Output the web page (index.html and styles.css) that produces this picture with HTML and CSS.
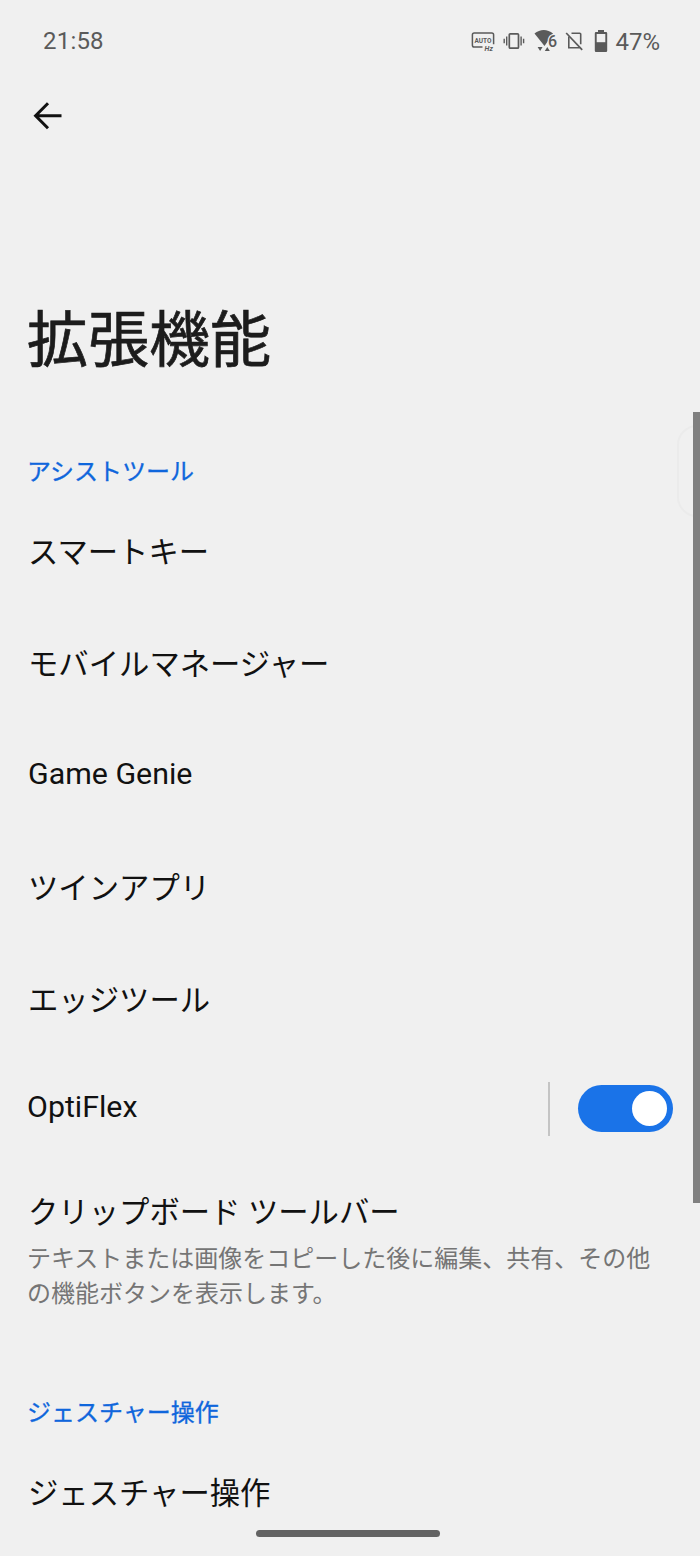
FILE: index.html
```html
<!DOCTYPE html>
<html lang="ja">
<head>
  <meta charset="UTF-8">
  <meta name="viewport" content="width=device-width, initial-scale=1.0">
  <title>拡張機能</title>
  <link rel="stylesheet" href="styles.css">
</head>
<body>
  <div class="screen">
    <div class="status-bar">
      <span class="clock">21:58</span>
      <div class="status-icons">
        <svg class="icon-refresh" width="24" height="22" viewBox="0 0 24 22">
          <path d="M11.5 17H3.200a1.800 1.800 0 0 1-1.800-1.800V4.800A1.800 1.800 0 0 1 3.200 3h17.600a1.800 1.800 0 0 1 1.800 1.800v9.500" fill="none" stroke="#5a5a5a" stroke-width="1.500"/>
          <text x="12" y="12.600" text-anchor="middle" class="auto-text">AUTO</text>
          <text x="13.600" y="20.600" class="hz-text">Hz</text>
        </svg>
        <svg class="icon-vibrate" width="22" height="20" viewBox="0 0 22 20">
          <rect x="6.300" y="2.800" width="9.200" height="14.400" rx="1" fill="none" stroke="#5a5a5a" stroke-width="1.700"/>
          <path d="M3.700 5.500v9M1.200 7.700v4.600M18.100 5.500v9M20.600 7.700v4.600" stroke="#5a5a5a" stroke-width="1.400"/>
        </svg>
        <svg class="icon-wifi" width="24" height="24" viewBox="0 0 24 24">
          <path d="M0.500 4.500C6-0.200 13.500-0.200 19 4.500L10.500 17z" fill="#5a5a5a"/>
          <path d="M3.600 18h5l-2.500 4zM10.800 22h5l-2.500-4z" fill="#5a5a5a"/>
          <text x="14" y="17.500" class="wifi-text">6</text>
        </svg>
        <svg class="icon-nosim" width="20" height="22" viewBox="0 0 20 22">
          <path d="M6.500 3.200h8.200a1 1 0 0 1 1 1v10M3.800 6.500v11.300h11" fill="none" stroke="#5a5a5a" stroke-width="1.600"/>
          <path d="M1.200 3l16 16.800" stroke="#5a5a5a" stroke-width="1.700"/>
        </svg>
        <svg class="icon-battery" width="14" height="24" viewBox="0 0 14 24">
          <path d="M4 1h6v2h2a1.200 1.200 0 0 1 1.200 1.200v17.600A1.200 1.200 0 0 1 12 23H2a1.200 1.200 0 0 1-1.200-1.200V4.200A1.200 1.200 0 0 1 2 3h2z" fill="#5a5a5a"/>
          <path d="M2.700 5h8.600v8.200H2.700z" fill="#f0f0f0"/>
        </svg>
        <span class="battery-level">47%</span>
      </div>
    </div>

    <div class="toolbar">
      <svg width="30" height="30" viewBox="0 0 30 30">
        <path d="M28.500 14.700H3M15 2.200L2.600 14.700 15 27.200" fill="none" stroke="#111" stroke-width="3"/>
      </svg>
    </div>

    <h1>拡張機能</h1>

    <h2>アシストツール</h2>
    <div class="item">スマートキー</div>
    <div class="item">モバイルマネージャー</div>
    <div class="item">Game Genie</div>
    <div class="item">ツインアプリ</div>
    <div class="item">エッジツール</div>
    <div class="item item-switch">
      <span class="item-label">OptiFlex</span>
      <div class="divider"></div>
      <div class="switch"><div class="knob"></div></div>
    </div>
    <div class="item-detail">
      <div class="item-title">クリップボード ツールバー</div>
      <p>テキストまたは画像をコピーした後に編集、共有、その他の機能ボタンを表示します。</p>
    </div>

    <h2>ジェスチャー操作</h2>
    <div class="item">ジェスチャー操作</div>

    <div class="edge-handle"></div>
    <div class="scrollbar"></div>
    <div class="home-bar"></div>
  </div>
</body>
</html>
```
FILE: styles.css
```css
body {
  margin: 0;
  background-color: #f0f0f0;
  font-family: Roboto, 'Noto Sans CJK JP', sans-serif;
  color: #111;
}
.screen {
  position: relative;
  width: 700px;
  height: 1556px;
  overflow: hidden;
}
.status-bar {
  display: flex;
  justify-content: space-between;
  align-items: center;
  height: 82px;
  padding: 0 40px 0 43px;
  font-size: 24px;
  color: #5a5a5a;
}
.clock {
  letter-spacing: 0.2px;
}
.status-icons {
  display: flex;
  align-items: center;
}
.icon-refresh {
  margin-right: 8px;
}
.icon-vibrate {
  margin-right: 9px;
}
.icon-wifi {
  margin-right: 7px;
}
.icon-nosim {
  margin-right: 9px;
}
.icon-battery {
  margin-right: 7px;
}
.battery-level {
  padding-top: 2px;
}
.auto-text {
  font-size: 6.5px;
  font-weight: bold;
  fill: #5a5a5a;
}
.hz-text {
  font-size: 7px;
  font-weight: bold;
  font-style: italic;
  fill: #5a5a5a;
}
.wifi-text {
  font-size: 16px;
  font-weight: 500;
  fill: #5a5a5a;
  stroke: #f0f0f0;
  stroke-width: 2.5px;
  paint-order: stroke;
}
.toolbar {
  display: flex;
  align-items: center;
  height: 68px;
  padding-left: 33px;
}
h1 {
  height: 147px;
  margin: 0;
  padding: 151px 0 0 27px;
  font-size: 61px;
  font-weight: 400;
  -webkit-text-stroke: 0.7px #1c1c1c;
  line-height: 80px;
  color: #1c1c1c;
}
h2 {
  margin: 0;
  padding-left: 27px;
  font-size: 24px;
  font-weight: 400;
  -webkit-text-stroke: 0.3px #0f66dc;
  line-height: 48px;
  color: #0f66dc;
}
.item {
  display: flex;
  align-items: center;
  box-sizing: border-box;
  height: 112.2px;
  padding-left: 28px;
  padding-bottom: 5px;
  font-size: 30.35px;
}
.item-switch {
  height: 104px;
  padding-left: 27px;
  padding-right: 27px;
  padding-bottom: 0;
}
.item-label {
  flex: 1;
  padding-bottom: 4px;
}
.divider {
  width: 2px;
  height: 54px;
  margin-right: 28px;
  background-color: #c4c4c4;
}
.switch {
  display: flex;
  justify-content: flex-end;
  align-items: center;
  box-sizing: border-box;
  width: 95px;
  height: 47px;
  padding-right: 6px;
  border-radius: 24px;
  background-color: #1a73e8;
}
.knob {
  width: 35px;
  height: 35px;
  border-radius: 50%;
  background-color: #fff;
}
.item-detail {
  height: 198px;
  padding: 30px 27px 0;
}
.item-title {
  padding-left: 1px;
  font-size: 30.35px;
  line-height: 44px;
}
.item-detail p {
  margin: 7px 0 0;
  font-size: 24px;
  line-height: 35px;
  color: #757575;
}
.edge-handle {
  position: absolute;
  top: 425px;
  left: 677px;
  width: 40px;
  height: 88px;
  border: 2px solid #ebebeb;
  border-radius: 20px;
}
.scrollbar {
  position: absolute;
  top: 412px;
  right: 0;
  width: 7px;
  height: 791px;
  background-color: #808080;
}
.home-bar {
  position: absolute;
  top: 1530px;
  left: 256px;
  width: 184px;
  height: 7px;
  border-radius: 4px;
  background-color: #636363;
}
```
